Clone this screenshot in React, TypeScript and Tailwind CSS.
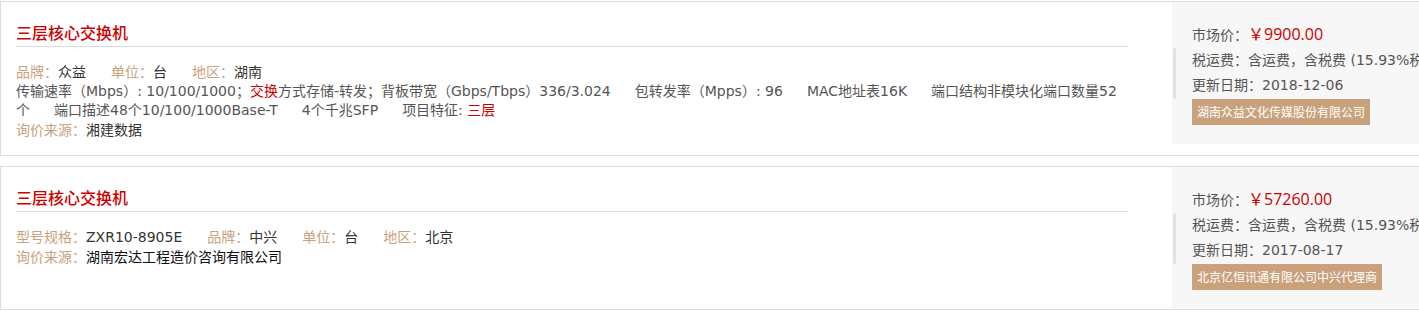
type Attr = { label: string; value: string };

type Item = {
  title: string;
  attrs: Attr[];
  desc?: React.ReactNode;
  source: string;
  sourceDark?: boolean;
  price: string;
  date: string;
  vendor: string;
};

const items: Item[] = [
  {
    title: "三层核心交换机",
    attrs: [
      { label: "品牌：", value: "众益" },
      { label: "单位：", value: "台" },
      { label: "地区：", value: "湖南" },
    ],
    desc: (
      <>
        <span className="mr-[24px]">
          传输速率（Mbps）: 10/100/1000；<span className="text-[#cc0000]">交换</span>方式存储-转发；背板带宽（Gbps/Tbps）336/3.024
        </span>
        <span className="mr-[24px]">包转发率（Mpps）: 96</span>
        <span className="mr-[24px]">MAC地址表16K</span>
        <span className="mr-[24px]">端口结构非模块化端口数量52 个</span>
        <span className="mr-[24px]">端口描述48个10/100/1000Base-T</span>
        <span className="mr-[24px]">4个千兆SFP</span>
        <span>
          项目特征: <span className="text-[#cc0000]">三层</span>
        </span>
      </>
    ),
    source: "湘建数据",
    price: "￥9900.00",
    date: "2018-12-06",
    vendor: "湖南众益文化传媒股份有限公司",
  },
  {
    title: "三层核心交换机",
    attrs: [
      { label: "型号规格：", value: "ZXR10-8905E" },
      { label: "品牌：", value: "中兴" },
      { label: "单位：", value: "台" },
      { label: "地区：", value: "北京" },
    ],
    source: "湖南宏达工程造价咨询有限公司",
    sourceDark: true,
    price: "￥57260.00",
    date: "2017-08-17",
    vendor: "北京亿恒讯通有限公司中兴代理商",
  },
];

const Card: React.FC<{ item: Item }> = ({ item }) => {
  return (
    <div className="flex w-[1444px] border border-[#dddddd] bg-white">
      {/* left: title + specs */}
      <div className="w-[1171px] pl-[15px] pr-[44px] pt-[18px] pb-[15px]">
        <h3 className="border-b border-[#dddddd] pb-[2px] font-['Noto_Sans_CJK_SC',sans-serif] text-[16px] font-medium leading-[24px] text-[#cc0000]">
          {item.title}
        </h3>
        <div className="mt-[16px] text-[14px] leading-[19px] text-[#333333]">
          {item.attrs.map((a) => (
            <span key={a.label} className="mr-[25px]">
              <span className="text-[#c9a27c]">{a.label}</span>
              {a.value}
            </span>
          ))}
        </div>
        {item.desc && <p className="text-[14px] leading-[19px] text-[#555555]">{item.desc}</p>}
        <div className="mt-px text-[14px] leading-[19px]">
          <span className="text-[#c9a27c]">询价来源：</span>
          <span className={item.sourceDark ? "text-[#111111]" : "text-[#333333]"}>{item.source}</span>
        </div>
      </div>

      {/* right: price panel */}
      <div className="flex h-[142px] w-[271px] self-start bg-[#f7f7f7]">
        <div className="ml-px mt-[46px] h-[51px] w-[3px] rounded-full bg-[#e2e2e2]" />
        <div className="ml-[16px] whitespace-nowrap pt-[20px] text-[14px] leading-[25px] text-[#555555]">
          <div>
            市场价：<span className="font-['Open_Sans','Noto_Sans_CJK_SC',sans-serif] text-[16px] text-[#cc0000]">{item.price}</span>
          </div>
          <div>税运费：含运费，含税费 (15.93%税率)</div>
          <div>更新日期：{item.date}</div>
          <div className="mt-px inline-block bg-[#c9a27c] px-[5px] font-['Noto_Sans_CJK_SC',sans-serif] text-[12px] leading-[26px] text-white">
            {item.vendor}
          </div>
        </div>
      </div>
    </div>
  );
};

const App: React.FC = () => {
  return (
    <div className="w-[1419px] overflow-hidden bg-white pt-px font-['DejaVu_Sans','Noto_Sans_CJK_SC',sans-serif]">
      <div className="flex flex-col gap-[10px]">
        {items.map((item, i) => (
          <Card key={i} item={item} />
        ))}
      </div>
    </div>
  );
};

export default App;
